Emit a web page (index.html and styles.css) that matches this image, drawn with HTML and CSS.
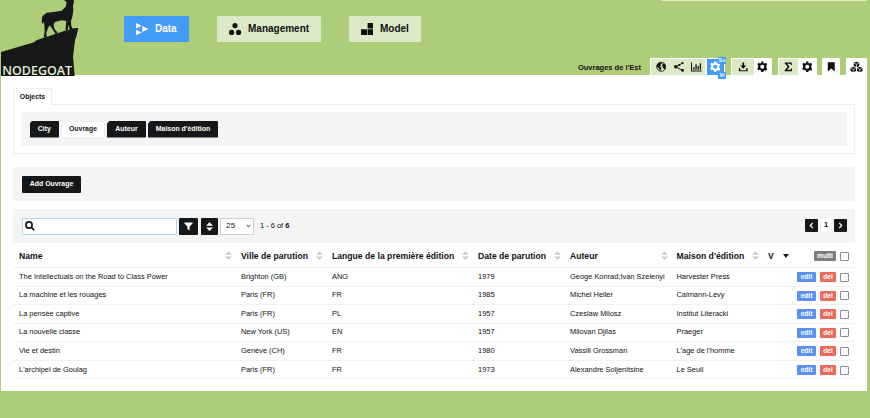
FILE: index.html
```
<!DOCTYPE html>
<html lang="fr">
<head>
<meta charset="utf-8">
<title>nodegoat</title>
<link rel="stylesheet" href="styles.css">
</head>
<body>
<svg class="defs" width="0" height="0">
  <symbol id="gear" viewBox="1 0 22 24"><path fill-rule="evenodd" d="M10 1h4l.7 3.300 2.200 1 3-1.800 2.300 3.400-1.600 3.100v4l1.900 2.800-2.300 3.500-3.200-1.200-1.900 1.300L14 23h-4l-1.300-3.600-1.900-1.300-3.200 1.200-2.100-3.500 1.900-2.800v-3L1.800 6.900l2.300-3.400 3 1.800 2.200-1zM12 7.800a4.200 4.200 0 1 0 0 8.400 4.200 4.200 0 0 0 0-8.400z"/></symbol>
  <symbol id="sort" viewBox="0 0 8 10"><path d="M4 0L8 4H0zM0 6h8L4 10z"/></symbol>
</svg>
<header class="top">
  <svg class="logo" viewBox="0 0 240 228">
    <path d="M3 156L103 127L109 121L195 92L222 85L235 84L229 110L225 120L219 170L224 228H3z"/>
    <path d="M192 0H221L222 7L219 15L220 32L217 50L213 63L214 78L218 88L209 90L206 74L203 90L196 91L199 63L184 61L165 66L161 73L163 86L174 100L167 102L155 84L149 76L144 85L139 97L140 111L131 113L134 94L133 74L130 65L128 72L125 65L127 49L140 38L162 36L185 32L197 20L200 7z"/>
    <text x="7" y="226" textLength="209" lengthAdjust="spacingAndGlyphs">NODEGOAT</text>
  </svg>
  <nav class="nav">
    <a class="tab on"><svg viewBox="0 0 12 12"><path d="M0 0L5.800 2.800L0 5.600zM6.300 3L12.300 6L6.300 9zM0 6.700L5.800 9.500L0 12.300z"/></svg>Data</a>
    <a class="tab mgmt"><svg viewBox="0 0 12 12"><circle cx="6" cy="2.600" r="2.600"/><circle cx="2.600" cy="9.400" r="2.600"/><circle cx="9.600" cy="9.400" r="2.600"/></svg>Management</a>
    <a class="tab model"><svg viewBox="0 0 12 12"><path d="M6.600 0H12V5.600H6.600zM0 6.300H6V12H0zM6.600 6.300H12V12H6.600z"/></svg>Model</a>
  </nav>
  <div class="tools">
    <span class="project">Ouvrages de l'Est</span>
    <div class="group g1">
      <i><svg viewBox="0 0 12 12"><circle cx="6" cy="6" r="5.200" fill="none" stroke="#151719" stroke-width="1"/><path d="M1 4L3 1.500L6 1L7 2.500L5 3.500L6 5L4 5.500L6.500 7L5.500 9L4.500 11L3.500 8L1 6zM8 2L10.500 3.500L11 7L9.500 9L8 7L7 4.500z"/></svg></i>
      <i><svg viewBox="0 0 12 12"><path d="M2 6L9.500 2M2 6L9.500 10" stroke="#151719" stroke-width="1.100"/><circle cx="2" cy="6" r="2"/><circle cx="6" cy="4" r="1.200"/><circle cx="9.800" cy="1.800" r="1.200"/><circle cx="9.800" cy="10.200" r="1.600"/></svg></i>
      <i><svg viewBox="0 0 12 12"><path d="M0 1h1.200v9.300h11v1.200H0zM2.500 6.500h1.500v3H2.500zM5 3h1.500v6.500H5zM7.500 5h1.500v4.500H7.500zM10 2h1.500v7.500H10z"/></svg></i>
      <i class="sel"><svg><use href="#gear"/></svg><b class="so">So</b><b class="vi">Vi</b></i>
    </div>
    <div class="group g2">
      <i class="tint"><svg viewBox="0 0 12 12"><path d="M5 1h2v3.500h2.500L6 8.300L2.500 4.500H5zM1 7.500h1.500V10h7V7.500H11v3.700H1z"/></svg></i>
      <i><svg><use href="#gear"/></svg></i>
    </div>
    <div class="group g3">
      <i class="tint"><svg viewBox="0 0 12 12"><path d="M2 1h8v3H9L8.300 2.500H4.800L7.500 6L4.500 9.500H8.500L9.200 8h1v3H2V10L5.200 6L2 2z"/></svg></i>
      <i><svg><use href="#gear"/></svg></i>
    </div>
    <div class="group g4"><i><svg viewBox="0 0 12 12"><path d="M2 .8h8v10.700L6 8L2 11.500z"/></svg></i></div>
    <div class="group g5"><i><svg viewBox="0 0 14 12"><path d="M7 .5l3 1.300v3.400L7 6.500L4 5.200V1.800zM3.500 6l3 1.300v3.400l-3 1.300l-3-1.300V7.300zM10.500 6l3 1.300v3.400l-3 1.300l-3-1.300V7.300z"/><path d="M4.500 2.200L7 3.300l2.500-1.100M7 3.300v3M1 7.700l2.500 1.100L6 7.700M3.500 8.800v3M8 7.700l2.500 1.100L13 7.700M10.500 8.800v3" fill="none" stroke="#fff" stroke-width=".7"/></svg></i></div>
  </div>
  <div class="strip"></div>
</header>
<main class="panel">
  <div class="tabhead">Objects</div>
  <section class="tabbody">
    <div class="types"><a class="t1">City</a><a class="t2 current">Ouvrage</a><a class="t3">Auteur</a><a class="t4">Maison d'édition</a></div>
  </section>
  <section class="bar add"><a class="btn">Add Ouvrage</a></section>
  <section class="bar filter">
    <div class="search"><svg viewBox="0 0 10 10"><circle cx="4" cy="4" r="3.100"/><path d="M6.300 6.300L9.200 9.200"/></svg></div>
    <a class="sq funnel"><svg viewBox="0 0 10 10"><path d="M.5.500h9v1.200L6.200 5V9.500L3.800 7.800V5L.5 1.700z"/></svg></a>
    <a class="sq order"><svg><use href="#sort"/></svg></a>
    <div class="count">25<svg viewBox="0 0 6 4"><path d="M.8.800L3 3L5.200.8"/></svg></div>
    <span class="range">1 - 6 of <b>6</b></span>
    <div class="pager"><a><svg viewBox="0 0 6 8"><path d="M4.500 1L1.500 4l3 3"/></svg></a><span>1</span><a><svg viewBox="0 0 6 8"><path d="M1.500 1L4.500 4l-3 3"/></svg></a></div>
  </section>
  <div class="table">
    <div class="row head">
      <span>Name<svg><use href="#sort"/></svg></span><span>Ville de parution<svg><use href="#sort"/></svg></span><span>Langue de la première édition<svg><use href="#sort"/></svg></span><span>Date de parution<svg><use href="#sort"/></svg></span><span>Auteur<svg><use href="#sort"/></svg></span><span>Maison d'édition<svg><use href="#sort"/></svg></span><span class="v">V<em></em></span>
      <div class="acts"><a class="multi">multi</a><u></u></div>
    </div>
    <div class="row"><span>The Intellectuals on the Road to Class Power</span><span>Brighton (GB)</span><span>ANG</span><span>1979</span><span>Geoge Konrad;Ivan Szelenyi</span><span>Harvester Press</span><span></span><div class="acts"><a class="edit">edit</a><a class="del">del</a><u></u></div></div>
    <div class="row"><span>La machine et les rouages</span><span>Paris (FR)</span><span>FR</span><span>1985</span><span>Michel Heller</span><span>Calmann-Lévy</span><span></span><div class="acts"><a class="edit">edit</a><a class="del">del</a><u></u></div></div>
    <div class="row"><span>La pensée captive</span><span>Paris (FR)</span><span>PL</span><span>1957</span><span>Czeslaw Milosz</span><span>Institut Literacki</span><span></span><div class="acts"><a class="edit">edit</a><a class="del">del</a><u></u></div></div>
    <div class="row"><span>La nouvelle classe</span><span>New York (US)</span><span>EN</span><span>1957</span><span>Milovan Djilas</span><span>Praeger</span><span></span><div class="acts"><a class="edit">edit</a><a class="del">del</a><u></u></div></div>
    <div class="row"><span>Vie et destin</span><span>Genève (CH)</span><span>FR</span><span>1980</span><span>Vassili Grossman</span><span>L'age de l'homme</span><span></span><div class="acts"><a class="edit">edit</a><a class="del">del</a><u></u></div></div>
    <div class="row"><span>L'archipel de Goulag</span><span>Paris (FR)</span><span>FR</span><span>1973</span><span>Alexandre Soljenitsine</span><span>Le Seuil</span><span></span><div class="acts"><a class="edit">edit</a><a class="del">del</a><u></u></div></div>
  </div>
</main>
</body>
</html>
```
FILE: styles.css
```
* { box-sizing: border-box; }
html, body { height: 418px; overflow: hidden; }
body { margin: 0; background: #adcd78; font: 7.45px/1.2 "Liberation Sans", Arial, sans-serif; color: #101113; }
svg { display: block; fill: currentColor; flex: none; }
.defs { position: absolute; }
.top { height: 75px; display: flex; align-items: flex-start; position: relative; }
.strip { position: absolute; top: 0; left: 661px; width: 206px; height: 1px; background: #dce9c6; }
.logo { width: 80px; height: 76px; color: #151719; overflow: visible; }
.logo text { font: 600 35px "Open Sans", sans-serif; fill: #e4efd0; }
.nav { display: flex; margin: 16px 0 0 44px; height: 25.5px; }
.tab { display: flex; align-items: center; width: 65px; padding: 1px 0 0 12px; gap: 7px; background: #dce9c6; border-radius: 1px; font-size: 10px; font-weight: bold; }
.tab svg { width: 12px; height: 12px; overflow: visible; }
.tab.on { background: #429cf7; color: #fff; }
.tab.mgmt { width: 104px; margin-left: 28px; }
.tab.model { width: 72px; margin-left: 28px; }
.tools { display: flex; align-items: center; margin: 58px 0 0 auto; height: 18px; }
.project { font-weight: bold; font-size: 7.5px; margin: 1px 9px 0 0; }
.group { display: flex; flex: none; background: #fff; height: 18px; padding: 1px; border-radius: 1px 1px 0 0; }
.group i { display: flex; flex: none; align-items: center; justify-content: center; height: 16px; width: 19px; position: relative; }
.group svg { width: 10.5px; height: 11.5px; }
.g1 { width: 75px; }
.g1 i { background: #dce9c6; width: 17px; }
.g1 i:first-child { width: 20px; }
.g1 i.sel { background: #429cf7; color: #fff; width: 17px; margin-left: 2px; }
.sel b { position: absolute; left: 11px; height: 7px; width: 8px; background: #429cf7; font: bold 5.500px/7px "Liberation Sans", sans-serif; text-align: center; border-radius: 1px; }
.so { top: -2px; }
.vi { bottom: -4px; }
.tint { background: #dce9c6; }
.g2 { width: 41px; margin-left: 6px; }
.g2 .tint { width: 22px; }
.g2 .tint + i { width: 17px; }
.g3 { width: 39px; margin-left: 6px; }
.g3 .tint + i { width: 18px; }
.g4 { width: 18px; margin-left: 5px; }
.g4 i { width: 16px; }
.g5 { width: 21px; margin: 0 3px 0 6px; }
.g5 svg { width: 13px; }
.panel { margin: 0 3px 0 1px; height: 316px; padding: 13px 12px 0; background: #fff; }
.tabhead { width: 39px; height: 17px; border: 1px solid #eee; border-bottom: 0; background: #fff; font-weight: bold; font-size: 6.9px; line-height: 15px; text-align: center; border-radius: 3px 0 0; position: relative; }
.tabbody { height: 50px; margin-top: -1px; border: 1px solid #eee; padding: 7px; }
.types { display: flex; align-items: center; gap: 2px; height: 34px; background: #f4f4f4; padding-left: 8.500px; }
.types a { height: 17px; background: #151719; color: #fff; font-weight: bold; font-size: 6.95px; line-height: 16px; text-align: center; border-radius: 1px; clip-path: polygon(3px 0, 100% 0, 100% 100%, 0 100%, 0 3px); }
.types .t1 { width: 29.500px; }
.types .t2 { width: 44px; }
.types .t3 { width: 39px; }
.types .t4 { width: 70px; }
.types .current { background: #fff; color: #151719; border: 1px solid #eee; line-height: 14px; }
.bar { background: #f4f4f4; display: flex; align-items: center; height: 34px; padding: 0 8px 0 9px; }
.add { margin-top: 13px; }
.btn { width: 59px; height: 17px; line-height: 16px; text-align: center; background: #151719; color: #fff; font-weight: bold; font-size: 6.95px; border-radius: 1px; }
.filter { margin-top: 8px; }
.search { width: 155px; height: 17px; border: 1px solid #b5d4ea; background: #fff; padding: 2px; border-radius: 1px; }
.search svg { width: 10px; height: 10px; fill: none; stroke: #151719; stroke-width: 1.7; }
.sq { display: flex; align-items: center; justify-content: center; width: 19px; height: 17px; background: #151719; color: #fff; margin-left: 2px; border-radius: 1px; }
.sq svg { width: 9px; height: 9px; }
.order { width: 17px; margin-left: 3px; }
.order svg { width: 7px; }
.count { display: flex; align-items: center; justify-content: space-between; width: 34px; height: 17px; margin-left: 2px; padding: 0 2px 0 5px; background: #fff; border: 1px solid #d0d0d0; font-size: 7.8px; letter-spacing: .4px; }
.count svg { width: 5px; height: 4px; fill: none; stroke: #151719; stroke-width: 1.1; }
.range { margin-left: 6px; }
.pager { margin: -2px 0 0 auto; display: flex; align-items: center; gap: 3px; }
.pager a, .pager span { width: 13px; height: 13px; display: flex; align-items: center; justify-content: center; background: #151719; border-radius: 1px; }
.pager span { width: 10px; background: #fff; font-weight: bold; }
.pager svg { width: 5px; height: 7px; fill: none; stroke: #fff; stroke-width: 1.4; }
.row { display: grid; grid-template-columns: 222px 91px 146px 92px 106.500px 91.500px 29px 1fr; align-items: center; height: 18.55px; padding: 1px 0 0 6px; border-bottom: 1px solid #f1f1f1; white-space: nowrap; }
.head { height: 25px; padding-top: 2px; font-size: 8.65px; }
.head span { display: flex; justify-content: space-between; align-items: center; padding-right: 9px; font-weight: bold; }
.head span svg { width: 7px; height: 9px; color: #ccc; margin-top: -2px; }
.head .v em { border: 3.500px solid transparent; border-top: 4px solid #151719; border-bottom: 0; }
.head .v { padding-right: 8px; }
.acts { display: flex; align-items: center; justify-content: flex-end; padding-right: 6px; }
.acts a { height: 10px; line-height: 10px; width: 19px; text-align: center; color: #fff; font-weight: bold; font-size: 6.6px; background: #5a90f0; border-radius: 1px; margin-right: 4px; }
.acts .del { width: 16px; background: #ed6a5a; }
.acts .multi { width: 22px; background: #7d7d7d; }
.acts u { width: 9px; height: 9px; border: 1px solid #8c8a99; border-radius: 1px; background: #fff; }
```
